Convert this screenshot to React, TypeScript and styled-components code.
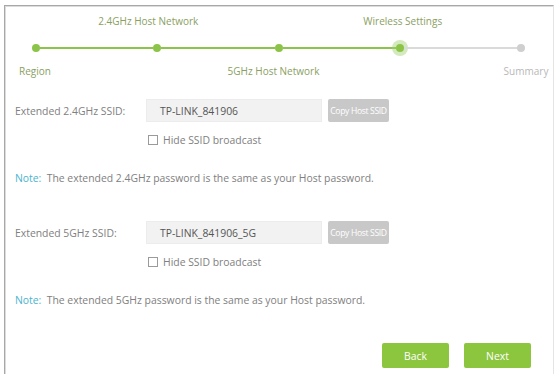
import React from "react";
import styled, { createGlobalStyle } from "styled-components";

const Global = createGlobalStyle`
  html, body { margin: 0; padding: 0; background: #fff; }
  body { font-family: "Open Sans", "Liberation Sans", sans-serif; overflow: hidden; }
  #root { width: 554px; height: 374px; }
`;

const Frame = styled.div`
  margin: 5px 0 0 4px;
  height: 369px;
  box-sizing: border-box;
  border-top: 1px solid #a8a8a8;
  border-left: 1px solid #a8a8a8;
  border-right: 1px solid #e4e4e4;
  box-shadow: inset 1px 1px 0 #dcdcdc;
  display: flex;
  flex-direction: column;
`;

const Stepper = styled.div`
  display: flex;
  align-items: flex-start;
  padding: 9px 24px 0 23px;
  height: 80px;
  box-sizing: border-box;
`;

const Step = styled.div`
  width: 16px;
  flex: none;
  display: flex;
  flex-direction: column;
  align-items: center;
`;

const StepLabel = styled.div<{ $tone: "done" | "todo" }>`
  height: 12px;
  line-height: 12px;
  font-size: 10px;
  white-space: nowrap;
  color: ${(p) => (p.$tone === "done" ? "#8aa062" : "#b8b8b8")};
`;

const TopLabel = styled(StepLabel)<{ $shift?: number }>`
  margin-bottom: 13px;
  transform: translateX(${(p) => p.$shift ?? 0}px);
`;

const BottomLabel = styled(StepLabel)<{ $shift?: number }>`
  margin-top: 9px;
  transform: translateX(${(p) => p.$shift ?? 0}px);
`;

const DotWrap = styled.div`
  width: 16px;
  height: 16px;
  display: flex;
  align-items: center;
  justify-content: center;
`;

const Dot = styled.div<{ $state: "done" | "active" | "todo" }>`
  width: 8px;
  height: 8px;
  border-radius: 50%;
  background: ${(p) => (p.$state === "todo" ? "#cfcfcf" : "#8cc44a")};
  box-shadow: ${(p) =>
    p.$state === "active" ? "0 0 0 4px rgba(160, 206, 110, 0.45)" : "none"};
`;

const Segment = styled.div<{ $done: boolean }>`
  flex: 1;
  height: 2px;
  margin: 32px -4px 0;
  background: ${(p) => (p.$done ? "#8cc44a" : "#dadada")};
`;

const Form = styled.div`
  display: flex;
  flex-direction: column;
  padding: 18px 0 0 10px;
  flex: 1;
`;

const Block = styled.div`
  display: flex;
  flex-direction: column;
  margin-bottom: 36px;
`;

const FieldRow = styled.div`
  display: flex;
  align-items: center;
  height: 23px;
`;

const FieldLabel = styled.div`
  width: 131px;
  font-size: 10.4px;
  color: #808080;
  white-space: nowrap;
`;

const SsidInput = styled.div`
  width: 176px;
  height: 23px;
  box-sizing: border-box;
  background: #f2f2f2;
  border: 1px solid #ececec;
  padding-left: 13px;
  display: flex;
  align-items: center;
  font-size: 10.4px;
  color: #555;
`;

const CopyButton = styled.div`
  margin-left: 6px;
  width: 61px;
  height: 23px;
  border-radius: 2px;
  background: #c8c8c8;
  color: #fff;
  font-size: 8.6px;
  letter-spacing: -0.35px;
  white-space: nowrap;
  display: flex;
  align-items: center;
  justify-content: center;
`;

const CheckRow = styled.label`
  display: flex;
  align-items: center;
  margin: 12px 0 0 133px;
  height: 12px;
  font-size: 10.4px;
  color: #808080;
`;

const Box = styled.span`
  width: 8px;
  height: 8px;
  border: 1px solid #9a9a9a;
  background: #fff;
  margin-right: 5px;
`;

const Note = styled.div`
  margin-top: 25px;
  font-size: 10.4px;
  color: #808080;
  white-space: nowrap;
`;

const NoteTag = styled.span`
  color: #4bb3cf;
`;

const Actions = styled.div`
  display: flex;
  justify-content: flex-end;
  gap: 15px;
  padding: 0 22px 6px 0;
`;

const GreenButton = styled.div`
  width: 67px;
  height: 25px;
  border-radius: 2px;
  background: #8cc63f;
  color: #fff;
  font-size: 10.4px;
  display: flex;
  align-items: center;
  justify-content: center;
`;

const blocks = [
  { label: "Extended 2.4GHz SSID:", ssid: "TP-LINK_841906", band: "2.4GHz" },
  { label: "Extended 5GHz SSID:", ssid: "TP-LINK_841906_5G", band: "5GHz" },
];

export default function App() {
  return (
    <>
      <Global />
      <Frame>
        <Stepper>
          <Step>
            <TopLabel $tone="done" />
            <DotWrap><Dot $state="done" /></DotWrap>
            <BottomLabel $tone="done" $shift={-1}>Region</BottomLabel>
          </Step>
          <Segment $done />
          <Step>
            <TopLabel $tone="done" $shift={-9}>2.4GHz Host Network</TopLabel>
            <DotWrap><Dot $state="done" /></DotWrap>
            <BottomLabel $tone="done" />
          </Step>
          <Segment $done />
          <Step>
            <TopLabel $tone="done" />
            <DotWrap><Dot $state="done" /></DotWrap>
            <BottomLabel $tone="done" $shift={-5}>5GHz Host Network</BottomLabel>
          </Step>
          <Segment $done />
          <Step>
            <TopLabel $tone="done" $shift={3}>Wireless Settings</TopLabel>
            <DotWrap><Dot $state="active" /></DotWrap>
            <BottomLabel $tone="done" />
          </Step>
          <Segment $done={false} />
          <Step>
            <TopLabel $tone="todo" />
            <DotWrap><Dot $state="todo" /></DotWrap>
            <BottomLabel $tone="todo" $shift={5}>Summary</BottomLabel>
          </Step>
        </Stepper>
        <Form>
          {blocks.map((b) => (
            <Block key={b.band}>
              <FieldRow>
                <FieldLabel>{b.label}</FieldLabel>
                <SsidInput>{b.ssid}</SsidInput>
                <CopyButton>Copy Host SSID</CopyButton>
              </FieldRow>
              <CheckRow>
                <Box />
                Hide SSID broadcast
              </CheckRow>
              <Note>
                <NoteTag>Note:</NoteTag>&nbsp; The extended {b.band} password is the same as your Host password.
              </Note>
            </Block>
          ))}
        </Form>
        <Actions>
          <GreenButton>Back</GreenButton>
          <GreenButton>Next</GreenButton>
        </Actions>
      </Frame>
    </>
  );
}
